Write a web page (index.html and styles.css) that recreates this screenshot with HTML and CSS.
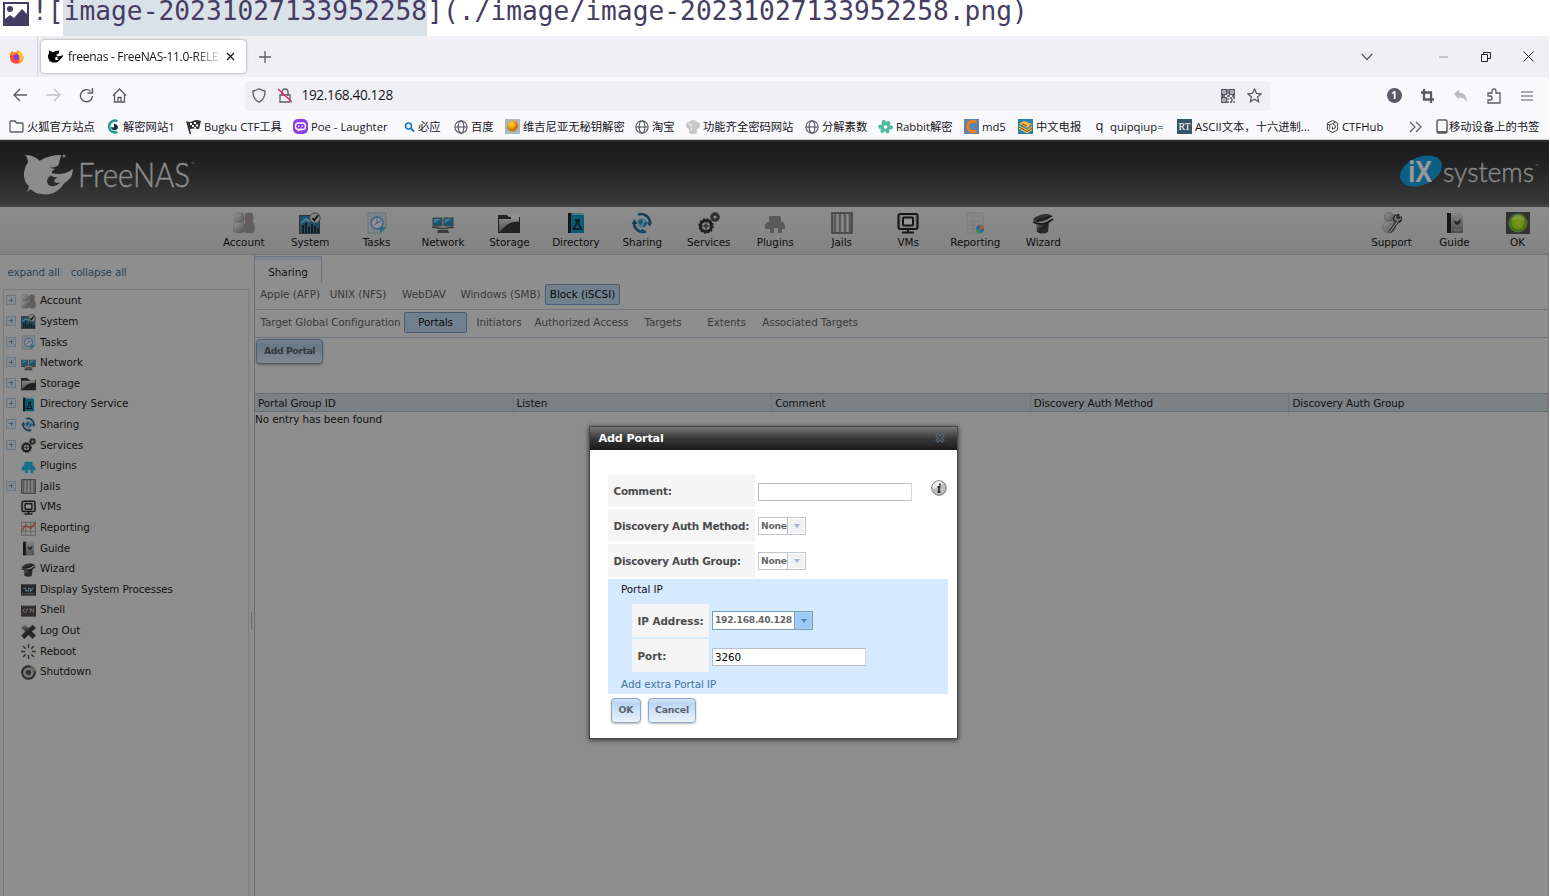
FILE: index.html
```html
<!DOCTYPE html>
<html lang="en">
<head>
<meta charset="utf-8">
<title>freenas - FreeNAS-11.0-RELEASE</title>
<link rel="stylesheet" href="styles.css">
</head>
<body>
<svg class="sprite" aria-hidden="true">
  <defs>
    <linearGradient id="g-metal" x1="0" y1="0" x2="0" y2="1"><stop offset="0" stop-color="#858585"/><stop offset="1" stop-color="#4c4c4c"/></linearGradient>
    <linearGradient id="g-dark" x1="0" y1="0" x2="1" y2="1"><stop offset="0" stop-color="#777"/><stop offset=".5" stop-color="#222"/><stop offset="1" stop-color="#333"/></linearGradient>
    <linearGradient id="g-head" x1="0" y1="0" x2="1" y2="1"><stop offset="0" stop-color="#989898"/><stop offset="1" stop-color="#4f4f4f"/></linearGradient>
    <radialGradient id="g-led"><stop offset="0" stop-color="#8a9a24"/><stop offset=".65" stop-color="#5c8c10"/><stop offset="1" stop-color="#2f5808"/></radialGradient>
    <radialGradient id="g-orb" cx=".4" cy=".35"><stop offset="0" stop-color="#ffd84a"/><stop offset=".6" stop-color="#f6a51c"/><stop offset="1" stop-color="#c97508"/></radialGradient>
  </defs>
  <symbol id="account" viewBox="0 0 22 22"><g stroke="#5a5a5a" stroke-width=".5"><rect x="2" y="1" width="9" height="10" rx="3" fill="url(#g-head)"/><rect x="12" y="1" width="8" height="10" rx="3" fill="#655b5c"/><rect x="0.5" y="10" width="11" height="11" rx="4" fill="url(#g-head)"/><rect x="11" y="10" width="10.5" height="11" rx="4" fill="#5f5f5f"/></g></symbol>
  <symbol id="system" viewBox="0 0 22 22"><rect x=".5" y="3.5" width="20" height="18" fill="#1d5069" stroke="#333"/><path d="M2 11l5-4 3 2 4-2" stroke="#4c7b8f" fill="none" stroke-width="2"/><path d="M4 21v-8M7 21V11M10 21v-6M13 21v-9M16 21v-7M19 21v-5" stroke="#191919" stroke-width="1.800"/><circle cx="16" cy="6" r="5.2" fill="#858585" stroke="#444"/><path d="M13.3 6l2 2.3 3.7-5" fill="none" stroke="#111" stroke-width="1.800"/></symbol>
  <symbol id="tasks" viewBox="0 0 22 22"><path d="M2 1h18v15l-5 5H2z" fill="#838788" stroke="#667175"/><path d="M4 4h14M4 7h14M4 18h10" stroke="#70828a"/><circle cx="11" cy="11" r="6" fill="#8d9499" stroke="#48678a" stroke-width="1.800"/><path d="M11 7v4l4-2M8 13l3-2" stroke="#49576a" fill="none"/><path d="M14 15h6l-6 6z" fill="#246a86"/></symbol>
  <symbol id="network" viewBox="0 0 22 22"><rect x="1" y="6" width="9" height="8" fill="#175673" stroke="#444"/><rect x="12" y="6" width="9" height="8" fill="#175673" stroke="#444"/><path d="M2 7h7l-7 4zM13 7h7l-7 4z" fill="#3c7f9a"/><path d="M0 15.500h4l4 1h6l4-1h4" stroke="#3a3a3a" stroke-width="1.500" fill="none"/><path d="M6 18h10l1 3H5z" fill="#3c3c3c"/></symbol>
  <symbol id="storage" viewBox="0 0 22 22"><path d="M0 3h9l2 2h11v16H0z" fill="#222"/><path d="M13 1l8 1v5h-8z" fill="#919191"/><path d="M1 7h20v3C12 9 6 14 2 20H1z" fill="url(#g-metal)"/></symbol>
  <symbol id="directory" viewBox="0 0 22 22"><path d="M3 1h15l1 2v18H3z" fill="#0b5974"/><path d="M3 1h3v20H3z" fill="#151515"/><path d="M7 2h12" stroke="#85979e"/><path d="M10 8h5M11.5 8v4l-3 5h8l-3-5V8" fill="none" stroke="#0a1922" stroke-width="1.5"/></symbol>
  <symbol id="sharing" viewBox="0 0 22 22"><circle cx="11" cy="11" r="5" fill="#5c7a89"/><path d="M7 9l4-2 1 3-3 4zm6 2l3-2-1 5-3 1z" fill="#195579"/><path d="M7 2.6a9 9 0 0 1 12 8M15 19.4A9 9 0 0 1 3 12" fill="none" stroke="#143f59" stroke-width="2.5"/><path d="M15.5 10.5h6l-3 4zM.5 12h6l-3-5z" fill="#143f59"/><path d="M9 20.5l2-4 4 3z" fill="#174d6b"/></symbol>
  <symbol id="services" viewBox="0 0 22 22"><circle cx="8" cy="14" r="5.5" fill="none" stroke="#202020" stroke-width="3"/><circle cx="8" cy="14" r="7" fill="none" stroke="#202020" stroke-width="1.5" stroke-dasharray="2 1.7"/><circle cx="8" cy="14" r="2" fill="#444"/><path d="M8 9v10M3 14h10" stroke="#333"/><circle cx="17" cy="5" r="3" fill="none" stroke="#303030" stroke-width="3"/><circle cx="17" cy="5" r="4.5" fill="none" stroke="#303030" stroke-dasharray="1.5 1.2"/></symbol>
  <symbol id="plug" viewBox="0 0 22 22"><path d="M6 4h10q1 0 1 2v4h2l2 3v4h-3v4h-4v-5h-4v5H6v-4H1v-4l2-3h2V6q0-2 1-2z" fill="currentColor"/></symbol>
  <symbol id="jails" viewBox="0 0 22 22"><rect x="1" y="1" width="20" height="20" fill="#777" stroke="#3c3c3c" stroke-width="1.5"/><path d="M4 2v18M9 2v18M14 2v18M19 2v18" stroke="#4c4c4c" stroke-width="1.3"/><path d="M6.3 2v18M11.3 2v18M16.3 2v18" stroke="#909090"/></symbol>
  <symbol id="vms" viewBox="0 0 22 22"><rect x="1.5" y="2" width="19" height="15" rx="2" fill="#858585" stroke="#171717" stroke-width="2.2"/><rect x="6" y="5.500" width="10" height="8" rx="1" fill="#959595" stroke="#171717" stroke-width="2"/><path d="M11 17v3M5 20.500h12" stroke="#171717" stroke-width="2"/></symbol>
  <symbol id="report" viewBox="0 0 22 22"><path d="M3 1h16v20H3z" fill="#888" stroke="#7b7b7b"/><path d="M7 4h8M5 9h12M5 13h7M5 17h6M9 8v12" stroke="#7a7a7a"/><circle cx="16" cy="17" r="4.200" fill="#376593"/><path d="M16 17v-4a4 4 0 0 1 4 4z" fill="#a05d36"/><path d="M16 17l-4 1a4 4 0 0 0 5 3z" fill="#37885c"/></symbol>
  <symbol id="chart" viewBox="0 0 22 22"><path d="M1 1v20M7 1v20M14 1v20M21 1v20M0 2h22M0 8h22M0 15h22M0 21h22" stroke="#555"/><path d="M1 14l6-8 7 5 7-8" fill="none" stroke="#913c31" stroke-width="2"/></symbol>
  <symbol id="guide" viewBox="0 0 22 22"><path d="M3 1h16v20H3z" fill="url(#g-metal)"/><path d="M3 1h4v20H3z" fill="#161616"/><path d="M10 8l3 2 4-3-1 4-2 2-3-1z" fill="#252525"/><path d="M10 18h7" stroke="#777"/></symbol>
  <symbol id="wizard" viewBox="0 0 22 22"><ellipse cx="10" cy="6" rx="9" ry="3.400" transform="rotate(-15 10 6)" fill="#303030"/><path d="M4 10q7 3 13 0l-1 10q-5 3-11 0z" fill="url(#g-dark)"/><path d="M1 10q10 5 20-3M5 9L20 4" fill="none" stroke="#1c1c1c" stroke-width="1.800"/></symbol>
  <symbol id="support" viewBox="0 0 22 22"><circle cx="8" cy="5" r="4.500" fill="url(#g-head)" stroke="#555" stroke-width=".6"/><ellipse cx="8" cy="15" rx="6.500" ry="6" fill="url(#g-head)" stroke="#555" stroke-width=".6"/><path d="M9 20l8-11M15 3q-3 3-1 6 4 2 6-2M17 2v4l4 0" stroke="#2c2c2c" stroke-width="3" fill="none"/><path d="M9 20l8-11M15 4q-2 3 0 4 3 1 5-2" stroke="#8a8a8a" stroke-width="1.200" fill="none"/></symbol>
  <symbol id="led" viewBox="0 0 24 22"><path d="M0 0h24v22H0z" fill="#303332"/><circle cx="12" cy="11" r="9" fill="url(#g-led)" stroke="#617452"/><path d="M5 9a7 6 0 0 1 14 0q-7-3-14 0" fill="#a0ae5d" opacity=".5"/></symbol>
  <symbol id="proc" viewBox="0 0 22 22"><path d="M0 3h22v17H0z" fill="#242424"/><path d="M1 4h20" stroke="#666"/><path d="M3 9h4v4h4V9h3v5l4-6" fill="none" stroke="#527b7e" stroke-width="1.5"/><path d="M1 17h20" stroke="#444" stroke-width="2"/></symbol>
  <symbol id="shell" viewBox="0 0 22 22"><path d="M0 3h22v17H0z" fill="#302d2c"/><path d="M1 4h20M5 8l-2 3 2 3M10 8l-3 6M12 9h4l-3 5m5-6v6" fill="none" stroke="#8a8a8a" stroke-width="1.2"/></symbol>
  <symbol id="logout" viewBox="0 0 22 22"><path d="M5 1l6 5 6-5 5 5-6 5 6 6-5 5-6-6-6 6-5-5 6-6-6-5z" fill="url(#g-dark)"/></symbol>
  <symbol id="reboot" viewBox="0 0 22 22"><path d="M11 0v6M11 16v6M0 11h6M16 11h6M3 3l4 4M15 15l4 4M3 19l4-4M15 7l4-4" stroke="#343434" stroke-width="2.200"/></symbol>
  <symbol id="shutdown" viewBox="0 0 22 22"><circle cx="11" cy="11" r="9.300" fill="#777" stroke="#292929" stroke-width="3"/><circle cx="11" cy="11" r="5" fill="#353535" stroke="#999"/><path d="M14 2q5 2 6 7" stroke="#8d8d8d" stroke-width="1.500" fill="none"/></symbol>
  <symbol id="shark" viewBox="0 0 50 42"><path d="M1 1Q10 1 16 7Q25 1 38 1L35 12Q31 14 26 14Q30 15 32 15Q27 18 29 20Q42 22 50 15Q50 23 45 27Q40 30 38 34Q30 43 18 41Q12 41 7 36L3 39Q5 35 5 33Q-1 28 0 19Q1 12 4 9Q4 4 1 1z" fill="currentColor"/><path d="M27 22q-5 4-3 8 1 3 6 3 5-1 7-4-5 2-6-1 0-3 4-4-5 0-8-2z" fill="var(--cut,#2a2a2a)"/></symbol>
  <symbol id="globe" viewBox="0 0 16 16"><g fill="none" stroke="#5b5b66" stroke-width="1.300"><circle cx="8" cy="8" r="7"/><ellipse cx="8" cy="8" rx="3.200" ry="7"/><path d="M1 8h14"/></g></symbol>
</svg>

<div class="note">
  <svg class="note-pic" viewBox="0 0 26 24"><rect x="1" y="1" width="24" height="22" fill="#fff" stroke="#443d61" stroke-width="2"/><circle cx="7" cy="7" r="3" fill="#443d61"/><path d="M2 22v-5l5-4 4 3 8-9 6 6v9z" fill="#443d61"/></svg>
  <p class="note-text">![<mark>image-20231027133952258</mark>](./image/image-20231027133952258.png)</p>
</div>

<div class="browser">
  <div class="tabstrip">
    <div class="ff"><svg width="15" height="15" viewBox="0 0 16 16"><path d="M1 6Q2 3 4 2v2q2-1 4 0l1-3q6 3 6.500 8Q15 15.500 8 15.800 1 15 1 9z" fill="#ff4b3e"/><path d="M9 1q6 2 6.300 8-1 5-5 6Q13 11 9 6z" fill="#ffc82e"/><path d="M1 6Q2 3 4 2v2q2-1 4 0L5 7z" fill="#ff8a16"/><circle cx="8" cy="8.500" r="3" fill="#7c3fe0"/></svg></div>
    <div class="tab"><svg class="tab-icon" width="15" height="13"><use href="#shark"/></svg><span class="tab-title">freenas - FreeNAS-11.0-RELEASE</span><svg width="9" height="9" viewBox="0 0 9 9"><path d="M1 1l7 7M8 1L1 8" stroke="#15141a" stroke-width="1.200"/></svg></div>
    <svg class="plus" width="12" height="12" viewBox="0 0 12 12"><path d="M6 0v12M0 6h12" stroke="#5b5b66" stroke-width="1.300"/></svg>
    <div class="winctl">
      <svg width="12" height="8" viewBox="0 0 12 8"><path d="M.8 1L6 6.500 11.200 1" fill="none" stroke="#5b5b66" stroke-width="1.300"/></svg>
      <svg width="9" height="10" viewBox="0 0 9 10"><path d="M0 5h9" stroke="#bbb" stroke-width="1.600"/></svg>
      <svg width="10" height="10" viewBox="0 0 10 10"><path d="M.5 2.500h6v7h-6zM2.500 2V.5h7v6H7" fill="none" stroke="#222"/></svg>
      <svg width="11" height="11" viewBox="0 0 11 11"><path d="M.5.5l10 10M10.500 .5l-10 10" stroke="#222"/></svg>
    </div>
  </div>
  <div class="navbar">
    <div class="navbtns">
      <svg width="15" height="14" viewBox="0 0 15 14"><path d="M14 7H1.500M7 1L1 7l6 6" fill="none" stroke="#5b5b66" stroke-width="1.300"/></svg>
      <svg width="15" height="14" viewBox="0 0 15 14"><path d="M0 7h13M8 1l6 6-6 6" fill="none" stroke="#c2c2c8" stroke-width="1.300"/></svg>
      <svg width="15" height="15" viewBox="0 0 15 15"><path d="M13.500 8A6 6 0 1 1 11.500 3.200M13.500 0v5h-5" fill="none" stroke="#5b5b66" stroke-width="1.400"/></svg>
      <svg width="15" height="15" viewBox="0 0 15 15"><path d="M1 7.500L7.500 1 14 7.500M2.500 6.500V14h10V6.500M6 14V9.500h3V14" fill="none" stroke="#5b5b66" stroke-width="1.300"/></svg>
    </div>
    <div class="urlbar">
      <svg width="14" height="15" viewBox="0 0 14 15"><path d="M7 .8Q10 2.500 13 3q.3 8-6 11.200Q.7 11 1 3q3-.5 6-2.200z" fill="none" stroke="#5b5b66" stroke-width="1.300"/></svg>
      <svg class="lock" width="14" height="15" viewBox="0 0 14 15"><path d="M2 7h10v7H2zM4 7V4a3 3 0 0 1 6 0v3" fill="none" stroke="#5b5b66" stroke-width="1.300"/><path d="M0 1l14 13" stroke="#e22850" stroke-width="1.400"/></svg>
      <span class="url">192.168.40.128</span>
      <svg class="qr" width="14" height="14" viewBox="0 0 14 14"><path d="M.7.700h4.600v4.600H.7zM8.700.700h4.600v4.600H8.700zM.7 8.700h4.600v4.600H.7z" fill="none" stroke="#45454d" stroke-width="1.200"/><path d="M2.300 3h1.400M10.300 3h1.400M2.300 11h1.400M7 0v5M0 7h4M6 7h3M11 7h3M7 9v2M7 12v2M9 9h2M12 9h2M10 11h2M9 13h2M13 12v2" stroke="#45454d" stroke-width="1.300"/></svg>
      <svg width="15" height="15" viewBox="0 0 16 16"><path d="M8 1l2.100 4.700 5 .5-3.800 3.400 1.100 5L8 12l-4.400 2.600 1.100-5L.9 6.200l5-.5z" fill="none" stroke="#5b5b66" stroke-width="1.300"/></svg>
    </div>
    <div class="exts">
      <span class="badge">1</span>
      <svg width="13" height="14" viewBox="0 0 13 14"><path d="M3 0v10.500h10M0 3.500h10V14" fill="none" stroke="#5b5b66" stroke-width="2.300"/></svg>
      <svg width="14" height="14" viewBox="0 0 14 14"><path d="M0 5l5-4.500V3.500q8 0 8 10-2-5-8-5v2z" fill="#bcbcc2"/></svg>
      <svg width="14" height="16" viewBox="0 0 14 16"><path d="M1 8V5h4V3a2 2 0 0 1 4 0v2h4v10H1v-3h2a2 2 0 0 0 0-4z" fill="none" stroke="#5b5b66" stroke-width="1.300"/></svg>
      <svg width="12" height="10" viewBox="0 0 12 10"><path d="M0 1h12M0 5h12M0 9h12" stroke="#5b5b66" stroke-width="1.200"/></svg>
    </div>
  </div>
  <div class="bookmarks">
    <span class="bm"><svg width="15" height="13" viewBox="0 0 15 13"><path d="M1 11V2q0-1 1-1h4l1.500 2H13q1 0 1 1v7q0 1-1 1H2q-1 0-1-1z" fill="none" stroke="#5b5b66" stroke-width="1.300"/></svg><b>火狐官方站点</b></span>
    <span class="bm"><svg width="14" height="15" viewBox="0 0 14 15"><path d="M11.500 2a6 6 0 1 0 0 11" fill="none" stroke="#1d9c8c" stroke-width="2.400"/><path d="M8 4.500q4 1 4 4 0 2-3 3-4-1-4-3.500l3 .5z" fill="#173036"/></svg><b>解密网站1</b></span>
    <span class="bm"><svg width="15" height="14" viewBox="0 0 15 14"><path d="M0 1q4 2 7 0t8 0l-2 8q-5-1-9 0l1 5H3.500z" fill="#333"/><path d="M4 3h2v2H4zM8 2h2v2H8zM6 5h2v2H6zM10 4.500h2v2h-2zM8 7h2v1.500H8z" fill="#fff"/></svg><b>Bugku CTF工具</b></span>
    <span class="bm"><svg width="15" height="15" viewBox="0 0 15 15"><rect width="15" height="15" rx="5" fill="#8b3df0"/><rect x="2.500" y="4" width="10" height="6.500" rx="3" fill="none" stroke="#fff" stroke-width="1.400"/><path d="M5 7.200h1.500M8.500 7.200H10M5 12l2-1.500h2" stroke="#fff" stroke-width="1.300" fill="none"/></svg><b>Poe - Laughter</b></span>
    <span class="bm"><svg width="12" height="12" viewBox="0 0 12 12"><circle cx="5.500" cy="5" r="3" fill="none" stroke="#1677c9" stroke-width="1.600"/><path d="M8 7.500l3 3" stroke="#1677c9" stroke-width="1.800"/></svg><b>必应</b></span>
    <span class="bm"><svg width="14" height="14"><use href="#globe"/></svg><b>百度</b></span>
    <span class="bm"><svg width="15" height="15" viewBox="0 0 15 15"><path d="M0 0h15v15H0z" fill="#a9b9c4"/><circle cx="7.500" cy="7" r="5.600" fill="url(#g-orb)"/></svg><b>维吉尼亚无秘钥解密</b></span>
    <span class="bm"><svg width="14" height="14"><use href="#globe"/></svg><b>淘宝</b></span>
    <span class="bm"><svg width="14" height="14" viewBox="0 0 14 14"><path d="M3 13V9Q0 8 0 5t3-3q4-4 8 0 3 0 3 3t-3 4v4q-4 2-8 0z" fill="#c6c6c6"/><path d="M2 4q2-2 4 0v7H5V6z" fill="#e4e4e4"/></svg><b>功能齐全密码网站</b></span>
    <span class="bm"><svg width="14" height="14"><use href="#globe"/></svg><b>分解素数</b></span>
    <span class="bm"><svg width="15" height="14" viewBox="0 0 15 14"><path d="M5 0q2-1 3 2 3-2 4 0 1 2-1 3 4 0 4 2.500T11 9.500q1 3-1 4-2 .5-3-2.500-2 3-4 1.500Q1.500 11 3.500 9 0 9 0 6.500T4 5Q3 1 5 0z" fill="#52b9a0"/><circle cx="7.500" cy="7" r="1.800" fill="#fff"/></svg><b>Rabbit解密</b></span>
    <span class="bm"><svg width="15" height="15" viewBox="0 0 15 15"><path d="M0 0h15v15H0z" fill="#5a83ad"/><path d="M12.500 2.500H8Q4 3 4 7.500T8 12.500h4.500" fill="none" stroke="#f07e18" stroke-width="3"/></svg><b>md5</b></span>
    <span class="bm"><svg width="15" height="15" viewBox="0 0 15 15"><path d="M0 0h15v15H0z" fill="#2681b4"/><path d="M1 4.500L6 2l8 3-5 4zM1 6l8 4.500L14 7v4l-5 3.500L1 10z" fill="#f3ba3e"/><path d="M1 8l8 4.500 5-3.500M4 5l5 2" stroke="#704a17" fill="none"/></svg><b>中文电报</b></span>
    <span class="bm bm-q"><em>q</em><b>quipqiup=</b></span>
    <span class="bm"><i class="rt">RT</i><b>ASCII文本，十六进制...</b></span>
    <span class="bm"><svg width="13" height="13" viewBox="0 0 14 14"><g fill="none" stroke="#333"><path d="M7 .5l5.500 3v7l-5.500 3-5.500-3v-7z"/><path d="M4 10V5.500L7 4l3 2v2.500L7 10V7M1.500 4L4 5.500M7 4l3-2"/></g></svg><b>CTFHub</b></span>
    <span class="bm"><svg width="13" height="12" viewBox="0 0 13 12"><path d="M1 1l5 5-5 5M7 1l5 5-5 5" fill="none" stroke="#5b5b66" stroke-width="1.200"/></svg></span>
    <span class="bm bm-m"><svg width="12" height="15" viewBox="0 0 12 15"><rect x="1" y="1" width="10" height="13" rx="1.500" fill="none" stroke="#5b5b66" stroke-width="1.500"/><path d="M1 13h10" stroke="#5b5b66" stroke-width="2"/></svg><b>移动设备上的书签</b></span>
  </div>
</div>

<div class="app">
  <header class="brand">
    <svg class="logo" width="180" height="48" viewBox="0 0 180 48"><svg x="4" y="3" width="49" height="41" class="logo-shark"><use href="#shark"/></svg><circle cx="44" cy="5" r="1.600" fill="#777"/><text x="58" y="35.500" class="logo-text" textLength="112" lengthAdjust="spacingAndGlyphs">FreeNAS</text><text x="170.500" y="15" class="tm">™</text></svg>
    <svg class="ix" width="146" height="42" viewBox="0 0 146 42"><ellipse cx="25" cy="20" rx="22" ry="14" transform="rotate(-24 25 20)" fill="#0d5f86"/><text x="12" y="31" class="ix-mark" textLength="24" lengthAdjust="spacingAndGlyphs">iX</text><text x="47" y="31" class="ix-text" textLength="91" lengthAdjust="spacingAndGlyphs">systems</text><text x="138.500" y="17" class="tm">™</text></svg>
  </header>
  <nav class="toolbar">
    <div class="tools">
      <a><svg><use href="#account"/></svg>Account</a><a><svg><use href="#system"/></svg>System</a><a><svg><use href="#tasks"/></svg>Tasks</a><a><svg><use href="#network"/></svg>Network</a><a><svg><use href="#storage"/></svg>Storage</a><a><svg><use href="#directory"/></svg>Directory</a><a><svg><use href="#sharing"/></svg>Sharing</a><a><svg><use href="#services"/></svg>Services</a><a><svg class="gray"><use href="#plug"/></svg>Plugins</a><a><svg><use href="#jails"/></svg>Jails</a><a><svg><use href="#vms"/></svg>VMs</a><a><svg><use href="#report"/></svg>Reporting</a><a><svg><use href="#wizard"/></svg>Wizard</a>
    </div>
    <div class="tools tools-right">
      <a><svg><use href="#support"/></svg>Support</a><a><svg><use href="#guide"/></svg>Guide</a><a><svg><use href="#led"/></svg>OK</a>
    </div>
  </nav>
  <div class="body">
    <aside class="side">
      <div class="links"><a>expand all</a><a>collapse all</a></div>
      <ul class="tree">
        <li><i class="ex"></i><svg><use href="#account"/></svg>Account</li>
        <li><i class="ex"></i><svg><use href="#system"/></svg>System</li>
        <li><i class="ex"></i><svg><use href="#tasks"/></svg>Tasks</li>
        <li><i class="ex"></i><svg><use href="#network"/></svg>Network</li>
        <li><i class="ex"></i><svg><use href="#storage"/></svg>Storage</li>
        <li><i class="ex"></i><svg><use href="#directory"/></svg>Directory Service</li>
        <li><i class="ex"></i><svg><use href="#sharing"/></svg>Sharing</li>
        <li><i class="ex"></i><svg><use href="#services"/></svg>Services</li>
        <li><i></i><svg class="teal"><use href="#plug"/></svg>Plugins</li>
        <li><i class="ex"></i><svg><use href="#jails"/></svg>Jails</li>
        <li><i></i><svg><use href="#vms"/></svg>VMs</li>
        <li><i></i><svg><use href="#chart"/></svg>Reporting</li>
        <li><i></i><svg><use href="#guide"/></svg>Guide</li>
        <li><i></i><svg><use href="#wizard"/></svg>Wizard</li>
        <li><i></i><svg><use href="#proc"/></svg>Display System Processes</li>
        <li><i></i><svg><use href="#shell"/></svg>Shell</li>
        <li><i></i><svg><use href="#logout"/></svg>Log Out</li>
        <li><i></i><svg><use href="#reboot"/></svg>Reboot</li>
        <li><i></i><svg><use href="#shutdown"/></svg>Shutdown</li>
      </ul>
    </aside>
    <div class="splitter"><i></i></div>
    <main class="main">
      <div class="toptabs"><span>Sharing</span></div>
      <div class="subtabs sub1"><a>Apple (AFP)</a><a>UNIX (NFS)</a><a>WebDAV</a><a>Windows (SMB)</a><a class="on">Block (iSCSI)</a></div>
      <div class="subtabs sub2"><a>Target Global Configuration</a><a class="on">Portals</a><a>Initiators</a><a>Authorized Access</a><a>Targets</a><a>Extents</a><a>Associated Targets</a></div>
      <div class="actions"><button class="add">Add Portal</button></div>
      <div class="thead"><span>Portal Group ID</span><span>Listen</span><span>Comment</span><span>Discovery Auth Method</span><span>Discovery Auth Group</span></div>
      <p class="empty">No entry has been found</p>
    </main>
  </div>
</div>

<section class="dialog">
  <div class="dtitle"><span>Add Portal</span><svg width="10" height="10" viewBox="0 0 10 10"><path d="M1.500 1.500l7 7M8.500 1.500l-7 7" stroke="#5d6d7b" stroke-width="3.600"/><path d="M2 2l6 6M8 2L2 8" stroke="#353c42" stroke-width="1.600"/></svg></div>
  <div class="dbody">
    <div class="frow"><label>Comment:</label><span class="input"></span><svg class="info" width="16" height="16" viewBox="0 0 16 16"><circle cx="8" cy="8" r="7.300" fill="#bcbcbc" stroke="#777"/><path d="M2 9a6 6 0 0 1 10-6Q8 8 2 9" fill="#ededed"/><path d="M9 3.500v2M6.500 7h2L7.500 12h2" stroke="#333" stroke-width="1.800" fill="none"/></svg></div>
    <div class="frow"><label>Discovery Auth Method:</label><span class="select off"><b>None</b><i></i></span></div>
    <div class="frow"><label>Discovery Auth Group:</label><span class="select off"><b>None</b><i></i></span></div>
    <div class="portal">
      <p>Portal IP</p>
      <div class="prow"><label>IP Address:</label><span class="select ip"><b>192.168.40.128</b><i></i></span></div>
      <div class="prow"><label>Port:</label><span class="input">3260</span></div>
      <a>Add extra Portal IP</a>
    </div>
    <div class="btns"><button class="ok">OK</button><button class="cancel">Cancel</button></div>
  </div>
</section>
</body>
</html>
```
FILE: styles.css
```css
* { box-sizing: border-box; }
html, body { margin: 0; height: 896px; overflow: hidden; background: #fff; }
body { font: 10.4px/14px "DejaVu Sans", sans-serif; letter-spacing: -.08px; color: #111; width: 1550px; }
p { margin: 0; }
.sprite { position: absolute; width: 0; height: 0; }
svg { display: block; flex: none; }

/* markdown source line */
.note { height: 36px; display: flex; align-items: flex-start; padding-left: 3px; background: linear-gradient(#dae2e9, #dae2e9) 63px 0/364px 36px no-repeat; }
.note-pic { width: 26px; height: 24px; margin-top: 2px; }
.note-text { font: 26.2px/24px "DejaVu Sans Mono", monospace; letter-spacing: .04px; color: #443d61; white-space: pre; margin: -1px 0 0 3px; }
.note-text mark { background: none; color: inherit; }

/* browser chrome */
.browser { width: 1549px; height: 104px; font-family: "Open Sans", "Noto Sans CJK SC", sans-serif; letter-spacing: 0; color: #15141a; background: #f9f9fb; border-bottom: 1px solid #ccc; }
.tabstrip { height: 41px; background: #f0f0f4; display: flex; align-items: center; }
.ff { width: 38px; height: 41px; border-right: 1px solid #d8d8dc; display: flex; align-items: center; padding-left: 9px; }
.tab { margin-left: 3px; width: 205px; height: 33px; border-radius: 4px; background: #fff; box-shadow: 0 0 3px rgba(0,0,0,.4); display: flex; align-items: center; padding: 0 10px 0 7px; }
.tab-icon { color: #000; --cut: #fff; }
.tab-title { width: 154px; margin: 0 4px 0 5px; font-size: 12px; letter-spacing: -.3px; white-space: nowrap; overflow: hidden; -webkit-mask-image: linear-gradient(90deg, #000 82%, transparent); mask-image: linear-gradient(90deg, #000 82%, transparent); }
.plus { margin-left: 13px; }
.winctl { margin-left: auto; display: grid; grid-template-columns: 78px 42px 42px 11px; align-items: center; padding-right: 15.500px; }
.navbar { height: 37px; display: flex; align-items: center; }
.navbtns { width: 245px; display: flex; gap: 18px; padding-left: 12.500px; }
.urlbar { width: 1025px; height: 30px; border-radius: 4px; background: #f0f0f4; display: flex; align-items: center; padding: 0 8px 0 7px; }
.lock { margin-left: 12px; }
.url { margin-left: 9.500px; font-size: 13.600px; letter-spacing: -.35px; line-height: 18px; margin-top: -1px; }
.qr { margin: 0 12px 0 auto; }
.exts { margin-left: auto; display: flex; align-items: center; gap: 19.500px; padding-right: 16.500px; }
.badge { width: 15px; height: 15px; border-radius: 50%; background: #5b5b66; color: #fff; font: bold 10px/15px "Open Sans", sans-serif; text-align: center; }
.bookmarks { height: 25px; padding-left: 9px; display: grid; grid-template-columns: 97px 80px 107px 110px 51px 51px 130px 51px 119px 73px 86px 54px 74px 85px 149px 83px 27px 112px; align-items: center; }
.bm { display: flex; align-items: center; gap: 3px; white-space: nowrap; font-size: 11.300px; line-height: 16px; }
.bm b { font-weight: 400; }
.bm em { font: 13px/14px "Open Sans", sans-serif; width: 15px; text-align: center; margin-top: -3px; }
.rt { width: 15px; height: 15px; background: #385467; color: #fff; font: 10px/15px "Liberation Serif", serif; text-align: center; }
.bm-m { gap: 1px; }

/* application frame, dimmed behind the dialog */
.app { width: 1549px; height: 756px; background: #8e8e8e; display: flex; flex-direction: column; }
.brand { height: 67px; background: linear-gradient(#1c1c1c, #202020 30%, #393939); border-top: 2px solid #2c2c2c; border-bottom: 3px solid #444; display: flex; justify-content: space-between; padding: 9px 7px 0 20px; }
.logo-shark { color: #8c8c8c; }
.logo-text { font: 300 33px Lato, sans-serif; fill: #8c8c8c; stroke: #8c8c8c; stroke-width: .5px; letter-spacing: 0; }
.tm { font: 5px "DejaVu Sans", sans-serif; fill: #888; }
.ix { margin-left: auto; }
.ix-mark { font: bold 29px "Open Sans", sans-serif; fill: #999; letter-spacing: 0; }
.ix-text { font: 300 28px Lato, sans-serif; fill: #888; stroke: #888; stroke-width: .5px; letter-spacing: 0; }
.toolbar { height: 48px; background: linear-gradient(#8c8c8c, #838383); border-bottom: 1px solid #777; display: flex; justify-content: space-between; padding: 5px 0 0 210.500px; }
.tools { display: grid; grid-template-columns: repeat(11, 66.450px) 68px 68px; }
.tools-right { grid-template-columns: repeat(3, 63px); }
.tools a { display: flex; flex-direction: column; align-items: center; gap: 1px; color: #0d0d0d; letter-spacing: -.05px; }
.tools svg { width: 24px; height: 22px; }
.gray { color: #5a5a5a; }
.teal { color: #137089; }
.body { flex: 1; display: flex; min-height: 0; }
.side { width: 249px; padding: 10px 0 0 3px; display: flex; flex-direction: column; }
.links { display: flex; gap: 11px; padding-left: 4.500px; color: #2c4459; height: 24px; letter-spacing: -.18px; }
.tree { flex: 1; list-style: none; margin: 0; padding: 0 0 0 2px; border: 1px solid #7c7c7c; border-bottom: 0; }
.tree li { height: 20.620px; display: flex; align-items: center; white-space: nowrap; }
.tree i { width: 10px; height: 10px; margin-right: 5px; }
.tree svg { width: 15px; height: 15px; margin: 2px 4px 0 0; }
.ex { border: 1px solid #6d7884; background: linear-gradient(#45566b, #45566b) center/4px 1px no-repeat, linear-gradient(#45566b, #45566b) center/1px 4px no-repeat, #858b90; }
.splitter { width: 5px; display: flex; justify-content: center; padding-top: 357px; }
.splitter i { width: 1px; height: 18px; background: #6a6a6a; }
.main { flex: 1; min-width: 0; border-left: 1px solid #696d75; border-right: 1px solid #777; }
.toptabs { height: 28px; padding-top: 1px; }
.toptabs span { display: block; width: 68px; height: 27px; margin-left: -1px; border: 1px solid #69727e; border-bottom: 0; border-radius: 2px 2px 0 0; background: linear-gradient(#79869a, #8e8e8e 6px); text-align: center; padding-top: 8px; }
.subtabs { display: grid; border-bottom: 1px solid #70747e; color: #393939; }
.subtabs a { text-align: center; height: 21px; line-height: 19px; border: 1px solid transparent; white-space: nowrap; }
.subtabs .on { background: #71808f; border-color: #4a5c6d; border-radius: 2px; color: #080808; }
.sub1 { height: 27px; padding: 1px 0 0 1px; grid-template-columns: 68px 68px 64px 89px 75px; letter-spacing: -.04px; }
.sub2 { height: 28px; padding: 2px 0 0 2px; grid-template-columns: 147px 63px 64px 101px 62px 65px 102px; }
.actions { height: 55px; padding: 1px; }
button { font: bold 9.300px/12px "DejaVu Sans", sans-serif; letter-spacing: -.1px; padding: 0 0 2px; color: #5c6269; border: 1px solid #8da9c6; border-radius: 4px; background: linear-gradient(#d7e6f6, #b9d6f4 20%, #ecf3fc); box-shadow: 0 1px 2px rgba(0,0,0,.3); }
.add { width: 67px; height: 25px; letter-spacing: -.5px; color: #34383c; border-color: #4e5f70; background: linear-gradient(#77828f, #687888 25%, #838990); }
.add { letter-spacing: -.45px; }
.thead { height: 19px; background: #7c8184; border: solid #686d71; border-width: 1px 0; display: grid; grid-template-columns: repeat(5, 258.600px); line-height: 19px; letter-spacing: -.1px; }
.thead span { padding-left: 3px; border-right: 1px solid #737679; }
.empty { line-height: 15px; }

/* dialog */
.dialog { position: absolute; left: 589px; top: 426px; width: 369px; height: 313px; background: #fff; border: 1px solid #484848; box-shadow: 0 1px 5px rgba(0,0,0,.7); }
.dtitle { height: 23px; background: linear-gradient(#777, #383838 50%, #191919); color: #fff; font-weight: bold; font-size: 11.200px; letter-spacing: -.15px; display: flex; align-items: center; justify-content: space-between; padding: 1px 12px 0 8.500px; }
.dtitle svg { margin-top: -3px; }
.dbody { padding: 24px 9px 0 18px; }
.frow { display: flex; height: 33px; margin-bottom: 2px; align-items: center; }
label { width: 147px; height: 33px; background: #f5f5f5; color: #4b4b4b; font-weight: bold; font-size: 10.400px; letter-spacing: -.24px; line-height: 34px; padding-left: 5.500px; margin-right: 3px; white-space: nowrap; flex: none; }
.input { width: 154px; height: 18px; border: 1px solid #b9bfcb; border-right-color: #d3d6de; background: #fff; padding-left: 2px; line-height: 17px; margin-top: 2px; color: #000; }
.info { margin: -6px 0 0 19px; }
.select { height: 18px; border: 1px solid #c2c6cf; background: #fff; display: flex; color: #666; }
.select b { font-size: 9.200px; letter-spacing: -.25px; line-height: 16px; padding-left: 2px; flex: 1; white-space: nowrap; }
.select i { width: 18px; border-left: 1px solid #b8bec9; display: flex; align-items: center; justify-content: center; background: #f1f1f1; box-shadow: inset 0 0 0 1px #fff; }
.select i::before { content: ""; border: solid transparent; border-width: 4px 3.500px 0; border-top-color: #9db4d3; }
.off { width: 48px; }
.ip { width: 101px; border-color: #759dc0; height: 19px; }
.ip i { background: #9ccafa; box-shadow: inset 0 0 0 1px #b6cde2; border-color: #759dc0; }
.ip i::before { border-top-color: #5682b4; }
.portal { width: 340px; height: 115px; background: #d6eaff; padding: 3px 0 0 24px; margin-top: 2px; }
.portal p, .portal a { margin-left: -11px; display: block; }
.portal p { margin-bottom: 8px; }
.portal a { color: #4272a0; margin-top: 5px; letter-spacing: -.05px; }
.prow { display: flex; height: 33px; margin-bottom: 2px; align-items: center; }
.prow label { width: 77px; letter-spacing: -.05px; }
.prow .select b { letter-spacing: -.45px; }
.prow .ip b { letter-spacing: -.28px; }
.btns { display: flex; gap: 7px; padding: 4px 0 0 3px; }
.ok { width: 30px; height: 25px; }
.cancel { width: 48px; height: 25px; }
```
